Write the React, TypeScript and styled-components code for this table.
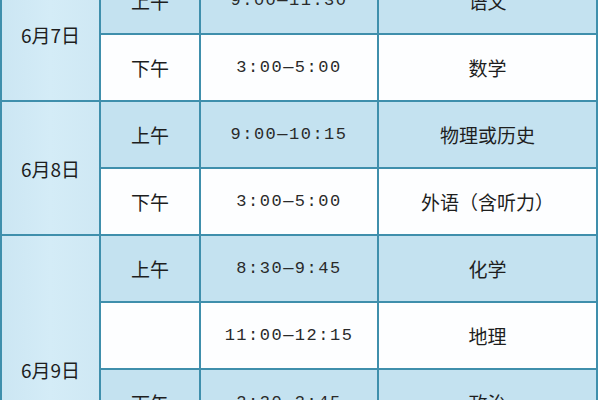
import React from 'react';
import styled, { createGlobalStyle } from 'styled-components';

const GlobalStyle = createGlobalStyle`
  html, body {
    margin: 0;
    padding: 0;
    background: #ffffff;
    overflow: hidden;
  }
`;

const Page = styled.div`
  width: 600px;
  height: 400px;
  overflow: hidden;
  background: #ffffff;
`;

const Grid = styled.div`
  width: 594px;
  margin-top: -34px;
  padding: 2px;
  display: grid;
  grid-template-columns: 97px 98px 176px 217px;
  grid-auto-rows: 65px;
  gap: 2px;
  background: #3f8fac;
  font-family: 'Noto Sans CJK SC', 'Noto Sans', sans-serif;
  color: #1e1e1e;
`;

const Cell = styled.div<{ $shade: boolean }>`
  display: flex;
  align-items: center;
  justify-content: center;
  font-size: 19px;
  background: ${(p) => (p.$shade ? '#c4e2f0' : '#fdfeff')};
`;

const DateCell = styled.div<{ $span: number }>`
  grid-row: span ${(p) => p.$span};
  display: flex;
  align-items: center;
  justify-content: center;
  font-size: 19px;
  background: linear-gradient(90deg, #cce6f3 0%, #d4ecf7 50%, #cfe8f4 100%);
`;

const Time = styled.span`
  font-family: 'Liberation Mono', 'DejaVu Sans Mono', monospace;
  font-size: 17px;
  letter-spacing: 1.5px;
  color: #2a2a2a;
`;

type Exam = { period: string; time: string; subject: string };
type Day = { date: string; exams: Exam[] };

const days: Day[] = [
  {
    date: '6月7日',
    exams: [
      { period: '上午', time: '9:00—11:30', subject: '语文' },
      { period: '下午', time: '3:00—5:00', subject: '数学' },
    ],
  },
  {
    date: '6月8日',
    exams: [
      { period: '上午', time: '9:00—10:15', subject: '物理或历史' },
      { period: '下午', time: '3:00—5:00', subject: '外语（含听力）' },
    ],
  },
  {
    date: '6月9日',
    exams: [
      { period: '上午', time: '8:30—9:45', subject: '化学' },
      { period: '', time: '11:00—12:15', subject: '地理' },
      { period: '下午', time: '2:30—3:45', subject: '政治' },
      { period: '', time: '5:15—6:30', subject: '生物' },
    ],
  },
];

export default function App() {
  let row = 0;
  return (
    <Page>
      <GlobalStyle />
      <Grid>
        {days.map((day) =>
          day.exams.map((exam, i) => {
            const shade = row % 2 === 0;
            row += 1;
            return (
              <React.Fragment key={day.date + i}>
                {i === 0 && <DateCell $span={day.exams.length}>{day.date}</DateCell>}
                <Cell $shade={shade}>{exam.period}</Cell>
                <Cell $shade={shade}>
                  <Time>{exam.time}</Time>
                </Cell>
                <Cell $shade={shade}>{exam.subject}</Cell>
              </React.Fragment>
            );
          })
        )}
      </Grid>
    </Page>
  );
}
